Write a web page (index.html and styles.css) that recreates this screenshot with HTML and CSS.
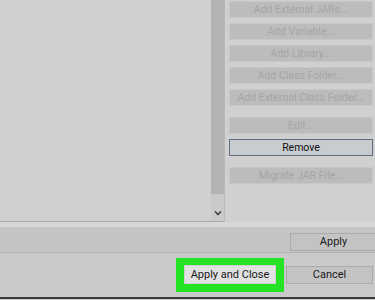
FILE: index.html
```html
<!DOCTYPE html>
<html lang="en">
<head>
    <meta charset="UTF-8">
    <title>Java Build Path</title>
    <link rel="stylesheet" href="styles.css">
</head>
<body>

<div class="main">
    <div class="listbox">
        <div class="list"></div>
        <div class="scrollbar">
            <div class="thumb"></div>
            <svg class="arrow" width="8" height="6" viewBox="0 0 8 6">
                <path d="M1 1.5 L4 4.5 L7 1.5" fill="none" stroke="#333" stroke-width="1.4"/>
            </svg>
        </div>
    </div>
    <div class="side">
        <button class="btn off">Add External JARs...</button>
        <button class="btn off">Add Variable...</button>
        <button class="btn off">Add Library...</button>
        <button class="btn off">Add Class Folder...</button>
        <button class="btn off">Add External Class Folder...</button>
        <button class="btn off sep">Edit...</button>
        <button class="btn focus">Remove</button>
        <button class="btn off sep">Migrate JAR File...</button>
    </div>
</div>

<div class="band"></div>
<div class="apply-row">
    <button class="btn dlg apply">Apply</button>
</div>
<div class="footer">
    <span class="highlight"><button class="btn dlg primary">Apply and Close</button></span>
    <button class="btn dlg cancel">Cancel</button>
</div>
<div class="edge"></div>

</body>
</html>
```

FILE: styles.css
```css
body { margin: 0; width: 375px; height: 300px; overflow: hidden; background: #c9c9c9; font-family: Roboto, "Open Sans", sans-serif; }
.main { display: flex; height: 222px; background: #d0d0d0; }
.listbox { display: flex; width: 224px; height: 221px; border-bottom: 1px solid #a9a9a9; border-right: 1px solid #b8b8b8; box-sizing: content-box; }
.list { flex: 1; }
.scrollbar { width: 13px; display: flex; flex-direction: column; align-items: center; background: #cacaca; }
.thumb { width: 13px; height: 194px; background: #b4b4b4; }
.arrow { margin-top: 16px; }
.side { display: flex; flex-direction: column; gap: 5px; padding: 1px 2px 0 4px; flex: 1; }
.btn { height: 17px; padding: 0; font-family: inherit; font-size: 10.5px; line-height: 15px; text-align: center; cursor: default; }
.off { background: #bcbcbc; border: 1px solid #c7c7c7; color: #a5a5a5; }
.sep { margin-top: 6px; }
.focus { background: #c8ccd0; border: 1px solid #5f6e7c; color: #111; }
.band { height: 5px; background: #d7d7d7; }
.apply-row { display: flex; justify-content: flex-end; height: 26px; background: #c4c4c4; border-bottom: 1px solid #b3b3b3; padding-top: 6px; box-sizing: border-box; }
.dlg { height: 18px; font-size: 11px; line-height: 16px; color: #1a1a1a; background: #c3c3c3; border: 1px solid #ababab; }
.apply { width: 87px; margin-right: -2px; }
.footer { display: flex; justify-content: flex-end; align-items: flex-start; height: 44px; padding: 5px 2px 0 0; box-sizing: border-box; background: #c9c9c9; }
.highlight { display: block; background: #24e324; padding: 7px 8px 8px 8px; margin-right: 2px; }
.primary { display: block; width: 92px; height: 19px; background: #e1e1e1; border: 1px solid #d0d0d0; }
.cancel { width: 87px; margin-top: 8px; }
.edge { height: 2px; background: #3c3c3c; }
```
